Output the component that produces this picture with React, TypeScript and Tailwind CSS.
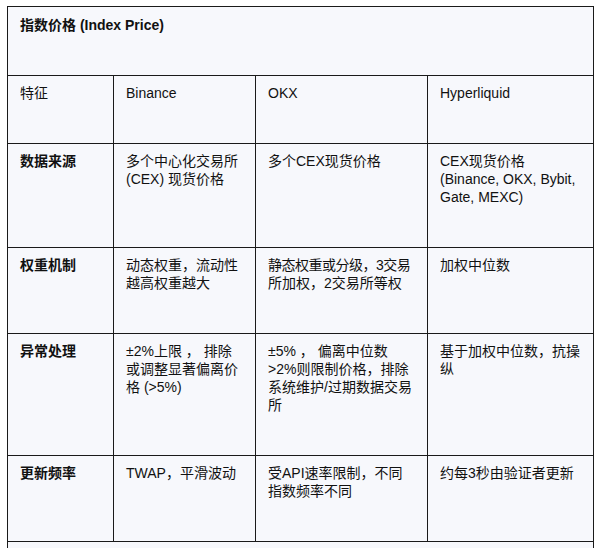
const columns = ["特征", "Binance", "OKX", "Hyperliquid"];

// lines are kept as in the reference so every cell wraps at the same place
const rows = [
  {
    label: "数据来源",
    binance: ["多个中心化交易所", "(CEX) 现货价格"],
    okx: ["多个CEX现货价格"],
    hyper: ["CEX现货价格", "(Binance, OKX, Bybit,", "Gate, MEXC)"],
  },
  {
    label: "权重机制",
    binance: ["动态权重，流动性", "越高权重越大"],
    okx: ["静态权重或分级，3交易", "所加权，2交易所等权"],
    hyper: ["加权中位数"],
  },
  {
    label: "异常处理",
    binance: ["±2%上限 ， 排除", "或调整显著偏离价", "格 (>5%)"],
    okx: ["±5% ， 偏离中位数", ">2%则限制价格，排除", "系统维护/过期数据交易", "所"],
    hyper: ["基于加权中位数，抗操", "纵"],
  },
  {
    label: "更新频率",
    binance: ["TWAP，平滑波动"],
    okx: ["受API速率限制，不同", "指数频率不同"],
    hyper: ["约每3秒由验证者更新"],
  },
];

const cell =
  "border border-[#1a1a1a] px-3 pt-[8px] pb-[41px] align-top text-left";

function Lines({ lines }: { lines: string[] }) {
  return (
    <>
      {lines.map((l) => (
        <div
          key={l}
          className={`whitespace-nowrap ${l === "静态权重或分级，3交易" ? "tracking-[-0.5px]" : ""}`}
        >
          {l}
        </div>
      ))}
    </>
  );
}

export default function App() {
  return (
    <div
      className="min-h-[548px] w-[599px] bg-white pl-[7px] pt-[6px] text-[14px] leading-[18px] text-[#111111]"
      style={{ fontFamily: '"Liberation Sans", Arial, "Noto Sans CJK SC", sans-serif' }}
    >
      <table className="w-[586px] table-fixed border-collapse bg-[#f7f8fc]">
        <colgroup>
          <col className="w-[106px]" />
          <col className="w-[142px]" />
          <col className="w-[172px]" />
          <col className="w-[166px]" />
        </colgroup>
        <tbody>
          <tr>
            <td colSpan={4} className={`${cell} pt-[9px] font-bold`}>
              指数价格 (Index Price)
            </td>
          </tr>
          <tr>
            {columns.map((c) => (
              <td key={c} className={`${cell} font-normal`}>
                {c}
              </td>
            ))}
          </tr>
          {rows.map((r) => (
            <tr key={r.label}>
              <td className={`${cell} font-bold`}>{r.label}</td>
              <td className={cell}>
                <Lines lines={r.binance} />
              </td>
              <td className={cell}>
                <Lines lines={r.okx} />
              </td>
              <td className={cell}>
                <Lines lines={r.hyper} />
              </td>
            </tr>
          ))}
          <tr>
            <td colSpan={4} className={cell}>
              &nbsp;
            </td>
          </tr>
        </tbody>
      </table>
    </div>
  );
}
